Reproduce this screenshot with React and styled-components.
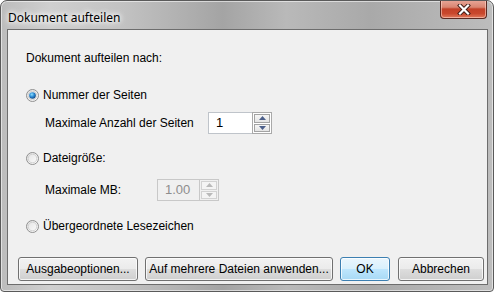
import React from "react";
import styled, { createGlobalStyle } from "styled-components";

const Global = createGlobalStyle`
  html, body { margin: 0; padding: 0; background: #ffffff; }
  * { box-sizing: border-box; }
`;

const Win = styled.div`
  width: 494px;
  height: 292px;
  display: flex;
  flex-direction: column;
  border: 1px solid #5a5a5a;
  border-radius: 7px 7px 4px 4px;
  overflow: hidden;
  background: linear-gradient(
    90deg,
    #bcbcbc 0%,
    #cfcfcf 10%,
    #c2c2c2 25%,
    #a4a4a4 45%,
    #b9b9b9 58%,
    #a9a9a9 75%,
    #bdbdbd 100%
  );
  box-shadow: inset 0 0 0 1px rgba(255, 255, 255, 0.55);
`;

const TitleBar = styled.div`
  height: 28px;
  flex: none;
  display: flex;
  align-items: flex-start;
  justify-content: space-between;
  padding: 0 6px 0 7px;
`;

const Title = styled.div`
  font-family: "Segoe UI", "Noto Sans", sans-serif;
  font-size: 12px;
  color: #000000;
  margin-top: 8px;
  text-shadow: 0 0 8px #ffffff, 0 0 6px #ffffff, 0 0 4px #ffffff;
`;

const CloseBtn = styled.div`
  width: 47px;
  height: 19px;
  margin-top: -1px;
  border: 1px solid #5b2a22;
  border-top: none;
  border-radius: 0 0 4px 4px;
  background: linear-gradient(
    180deg,
    #e9a89a 0%,
    #d98571 40%,
    #c24128 50%,
    #c9482d 75%,
    #e07a5c 100%
  );
  box-shadow: inset 0 0 0 1px rgba(255, 220, 210, 0.55);
  display: flex;
  align-items: center;
  justify-content: center;
`;

const Frame = styled.div`
  flex: 1;
  padding: 0 6px 6px 6px;
  display: flex;
`;

const Panel = styled.div`
  flex: 1;
  border: 1px solid #6d6d6d;
  background: #f0f0f0;
  display: flex;
  flex-direction: column;
  padding: 20px 3px 2px 10px;
  font-family: "Liberation Sans", Arial, sans-serif;
  font-size: 12px;
  color: #000000;
`;

const Heading = styled.div`
  height: 16px;
  line-height: 16px;
  padding-left: 8px;
`;

const RadioRow = styled.label`
  height: 16px;
  display: flex;
  align-items: center;
  gap: 4px;
  padding-left: 8px;
  margin-top: ${(p) => p.$gap}px;
  color: #000000;
`;

const FieldRow = styled.div`
  height: 22px;
  display: flex;
  align-items: center;
  padding-left: 27px;
  margin-top: ${(p) => p.$gap}px;
`;

const FieldLabel = styled.span`
  width: ${(p) => p.$w}px;
  flex: none;
`;

const Spinner = styled.div`
  display: flex;
  height: 22px;
  width: ${(p) => p.$w}px;
`;

const SpinInput = styled.div`
  flex: 1;
  border: 1px solid ${(p) => (p.$disabled ? "#c8c8c8" : "#bfc4ca")};
  border-right: none;
  background: ${(p) => (p.$disabled ? "#f0f0f0" : "#ffffff")};
  color: ${(p) => (p.$disabled ? "#8d8d8d" : "#000000")};
  padding-left: 7px;
  line-height: 20px;
  font-size: 13px;
`;

const SpinButtons = styled.div`
  width: 20px;
  display: flex;
  flex-direction: column;
  border: 1px solid ${(p) => (p.$disabled ? "#c8c8c8" : "#a9a9a9")};
  background: ${(p) => (p.$disabled ? "#f0f0f0" : "#ffffff")};
`;

const SpinBtn = styled.div`
  flex: 1;
  margin: 1px;
  border: 1px solid ${(p) => (p.$disabled ? "#d2d2d2" : "#a3a3a3")};
  background: ${(p) =>
    p.$disabled
      ? "#f4f4f4"
      : "linear-gradient(180deg, #f6f6f6 0%, #e4e4e4 100%)"};
  display: flex;
  align-items: center;
  justify-content: center;
  & + & { margin-top: 0; }
`;

const ButtonBar = styled.div`
  margin-top: 23px;
  display: flex;
  gap: 7px;
  padding-left: 0;
`;

const Button = styled.div`
  height: 24px;
  width: ${(p) => p.$w}px;
  margin-left: ${(p) => p.$ml || 0}px;
  border: 1px solid ${(p) => (p.$default ? "#3c7fb1" : "#707070")};
  border-radius: 3px;
  display: flex;
  align-items: center;
  justify-content: center;
  font-size: 12px;
  color: #000000;
  background: ${(p) =>
    p.$default
      ? "linear-gradient(180deg, #eaf6fd 0%, #d9f0fc 50%, #bee6fd 51%, #a7d9f5 100%)"
      : "linear-gradient(180deg, #f2f2f2 0%, #ebebeb 50%, #dddddd 51%, #cfcfcf 100%)"};
  box-shadow: inset 0 0 0 1px rgba(255, 255, 255, 0.75);
`;

const Radio = ({ checked }) => (
  <svg width="13" height="13" viewBox="0 0 13 13">
    <defs>
      <linearGradient id={checked ? "rb1" : "rb0"} x1="0" y1="0" x2="1" y2="1">
        <stop offset="0" stopColor="#e0e0e0" />
        <stop offset="1" stopColor="#ffffff" />
      </linearGradient>
      <radialGradient id="dot" cx="0.4" cy="0.35" r="0.7">
        <stop offset="0" stopColor="#8ee0ff" />
        <stop offset="0.5" stopColor="#2a8ad4" />
        <stop offset="1" stopColor="#0d3e78" />
      </radialGradient>
    </defs>
    <circle cx="6.5" cy="6.5" r="6" fill={`url(#${checked ? "rb1" : "rb0"})`} stroke="#8f8f8f" />
    <circle cx="6.5" cy="6.5" r="4.3" fill="none" stroke="#c9c9c9" strokeWidth="0.8" />
    {checked && <circle cx="6.5" cy="6.5" r="3.3" fill="url(#dot)" />}
  </svg>
);

const Arrow = ({ up, disabled }) => (
  <svg width="7" height="4" viewBox="0 0 7 4">
    <polygon
      points={up ? "0,4 7,4 3.5,0" : "0,0 7,0 3.5,4"}
      fill={disabled ? "#b9b9b9" : "#4c5f8a"}
    />
  </svg>
);

const SpinBox = ({ value, width, disabled }) => (
  <Spinner $w={width}>
    <SpinInput $disabled={disabled}>{value}</SpinInput>
    <SpinButtons $disabled={disabled}>
      <SpinBtn $disabled={disabled}>
        <Arrow up disabled={disabled} />
      </SpinBtn>
      <SpinBtn $disabled={disabled}>
        <Arrow disabled={disabled} />
      </SpinBtn>
    </SpinButtons>
  </Spinner>
);

export default function App() {
  return (
    <>
      <Global />
      <Win>
        <TitleBar>
          <Title>Dokument aufteilen</Title>
          <CloseBtn>
            <svg width="14" height="11" viewBox="0 0 14 11">
              <path
                d="M3 1.5 L11 9.5 M11 1.5 L3 9.5"
                stroke="#3a1a14"
                strokeWidth="4"
                strokeLinecap="square"
              />
              <path
                d="M3 1.5 L11 9.5 M11 1.5 L3 9.5"
                stroke="#ffffff"
                strokeWidth="2.2"
                strokeLinecap="square"
              />
            </svg>
          </CloseBtn>
        </TitleBar>
        <Frame>
          <Panel>
            <Heading>Dokument aufteilen nach:</Heading>
            <RadioRow $gap={21}>
              <Radio checked />
              Nummer der Seiten
            </RadioRow>
            <FieldRow $gap={9}>
              <FieldLabel $w={163}>Maximale Anzahl der Seiten</FieldLabel>
              <SpinBox value="1" width={64} />
            </FieldRow>
            <RadioRow $gap={16}>
              <Radio />
              Dateigröße:
            </RadioRow>
            <FieldRow $gap={13}>
              <FieldLabel $w={112}>Maximale MB:</FieldLabel>
              <SpinBox value="1.00" width={62} disabled />
            </FieldRow>
            <RadioRow $gap={17}>
              <Radio />
              Übergeordnete Lesezeichen
            </RadioRow>
            <ButtonBar>
              <Button $w={120}>Ausgabeoptionen...</Button>
              <Button $w={188}>Auf mehrere Dateien anwenden...</Button>
              <Button $w={50} $default>OK</Button>
              <Button $w={86} $ml={1}>Abbrechen</Button>
            </ButtonBar>
          </Panel>
        </Frame>
      </Win>
    </>
  );
}
